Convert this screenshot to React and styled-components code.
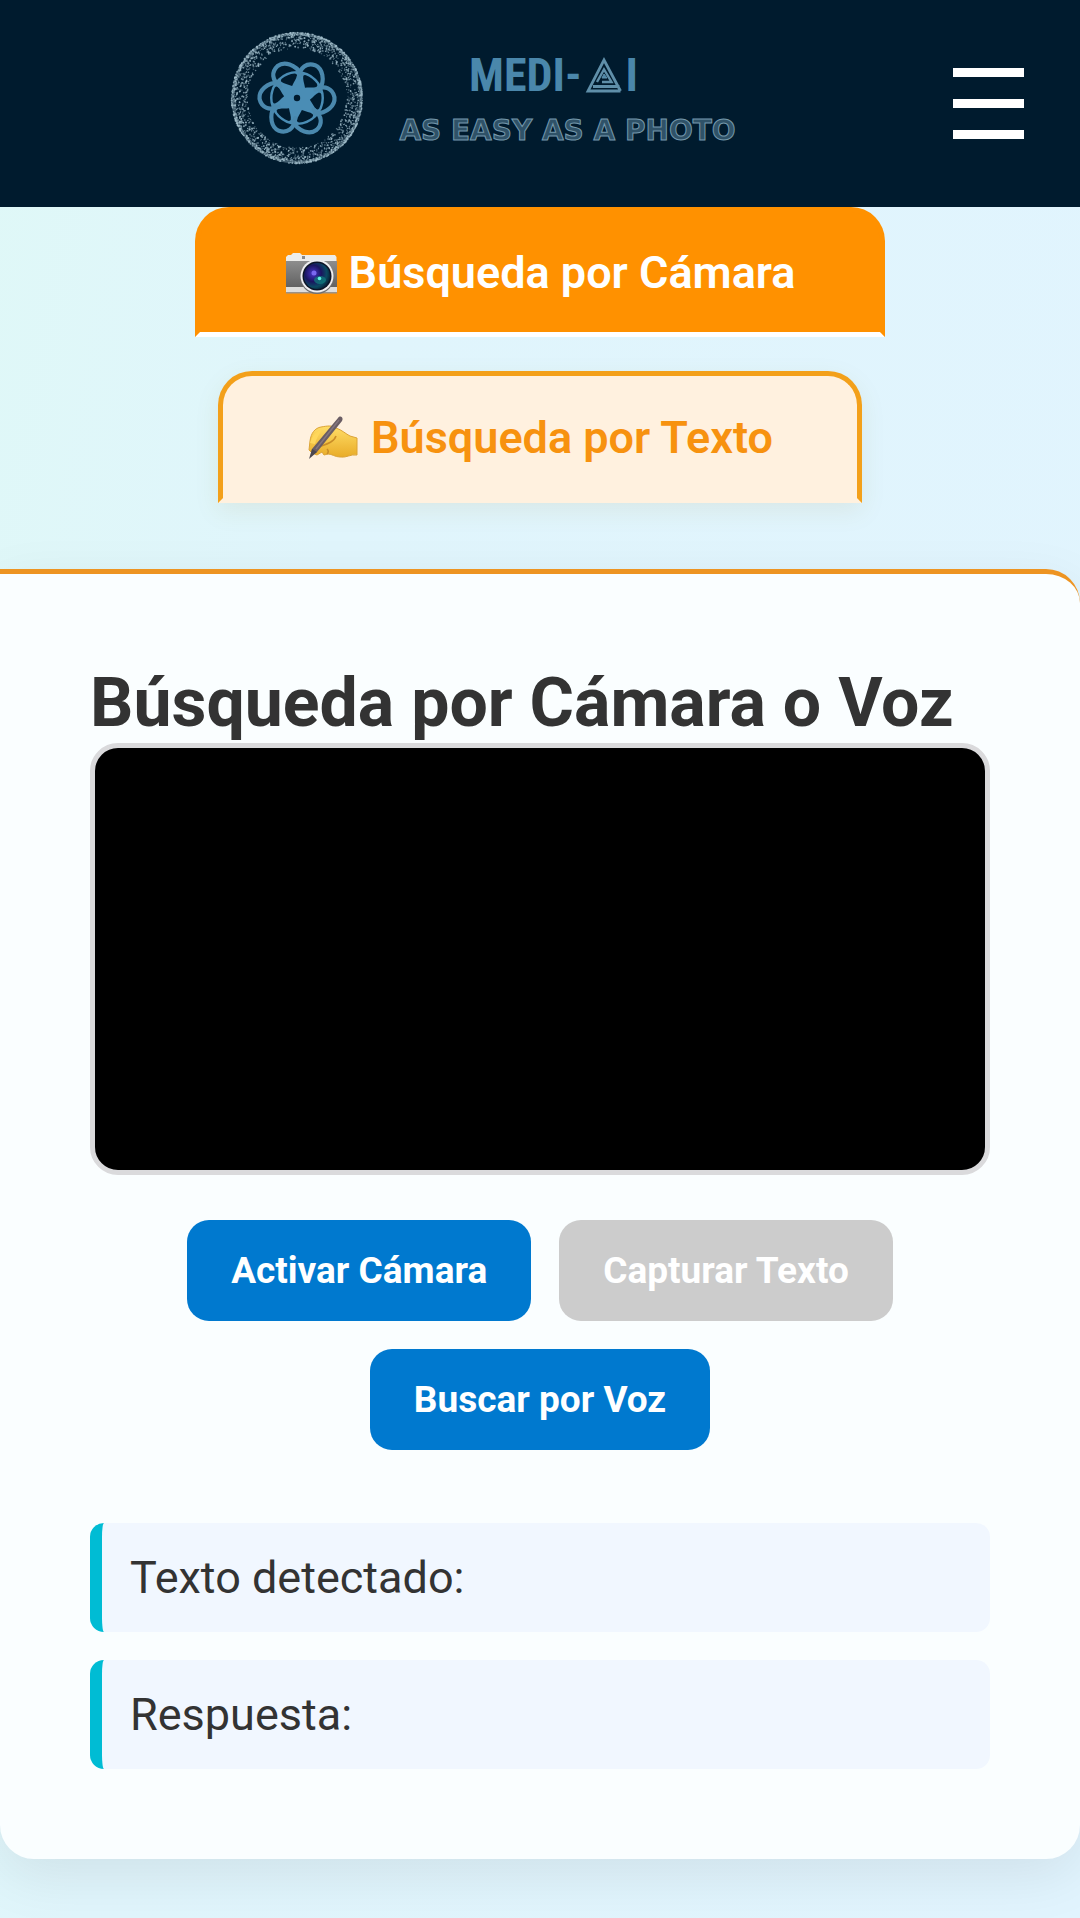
import React, { useState } from "react";
import styled, { createGlobalStyle, css } from "styled-components";

const GlobalStyle = createGlobalStyle`
  *, *::before, *::after { box-sizing: border-box; }
  body {
    margin: 0;
    min-height: 100vh;
    overflow-x: hidden;
    font-family: Roboto, "Noto Sans", sans-serif;
    font-size: 45px;
    color: #333333;
    background: linear-gradient(100deg, #dff8f7 0%, #e0f5fc 30%, #e1f4fe 100%);
  }
`;

const Header = styled.header`
  display: flex;
  align-items: center;
  padding: 30px 56px 31px 12px;
  background: #001b2e;
`;

const Brand = styled.a`
  flex: 1;
  display: flex;
  align-items: center;
  justify-content: center;
  gap: 34px;
  padding-bottom: 10px;
  color: #4a87ab;
  text-decoration: none;
`;

const BrandText = styled.span`
  display: flex;
  flex-direction: column;
  align-items: center;
  gap: 18px;
`;

const BrandName = styled.span`
  display: flex;
  align-items: center;
  gap: 3px;
  padding-right: 28px;
  font-family: "Liberation Sans Narrow", "Roboto Condensed", Roboto, sans-serif;
  font-size: 46px;
  line-height: 48px;
  font-weight: 700;
`;

const Tagline = styled.span`
  font-family: "DejaVu Sans", sans-serif;
  font-size: 28px;
  line-height: 28px;
  font-weight: 700;
  white-space: nowrap;
  color: #2f5268;
  -webkit-text-stroke: 1px #7598ab;
`;

const MenuButton = styled.button`
  display: flex;
  flex-direction: column;
  gap: 22px;
  padding: 0;
  border: 0;
  background: none;
  cursor: pointer;
`;

const MenuBar = styled.span`
  display: block;
  width: 71px;
  height: 9px;
  background: #ffffff;
`;

const Tabs = styled.nav`
  display: flex;
  flex-direction: column;
  align-items: center;
  gap: 34px;
  padding-bottom: 66px;
`;

const Tab = styled.button`
  display: flex;
  align-items: center;
  gap: 12px;
  border: 5px solid;
  border-radius: 34px 34px 0 0;
  font: 600 45px/52px Roboto, "Noto Sans", sans-serif;
  cursor: pointer;
  ${({ $active }) =>
    $active
      ? css`
          padding: 35px 85px 33px;
          color: #ffffff;
          background: #ff9100;
          border-color: #ff9100 #ff9100 #ffffff;
        `
      : css`
          padding: 36px 84px 34px;
          color: #f7920f;
          background: #fff1df;
          border-color: #f3a01a #f3a01a #fff1df;
          box-shadow: 0 8px 24px rgba(150, 130, 40, 0.1);
        `}
`;

const Panel = styled.main`
  padding: 90px;
  border-top: 5px solid #ed9422;
  border-radius: 0 34px 34px 34px;
  background: #fafeff;
  box-shadow: 0 17px 56px rgba(0, 0, 0, 0.08);
  margin-bottom: 59px;
`;

const Title = styled.h2`
  margin: 0;
  font-size: 68px;
  line-height: 79px;
  font-weight: 700;
`;

const CameraView = styled.video`
  display: block;
  width: 100%;
  aspect-ratio: 900 / 432;
  border: 5px solid #dadadc;
  border-radius: 28px;
  background: #000000;
`;

const Actions = styled.div`
  display: flex;
  flex-wrap: wrap;
  justify-content: center;
  gap: 28px;
  margin: 45px 0 73px;
`;

const ActionButton = styled.button`
  padding: 28px 44px;
  border: 0;
  border-radius: 22px;
  font: 700 37px/45px Roboto, "Noto Sans", sans-serif;
  color: #ffffff;
  background: #0079cf;
  cursor: pointer;
  &:disabled {
    background: #cccccc;
    cursor: default;
  }
`;

const Results = styled.section`
  display: flex;
  flex-direction: column;
  gap: 28px;
`;

const Result = styled.p`
  margin: 0;
  padding: 28px;
  border-left: 12px solid #00bcd4;
  border-radius: 14px;
  line-height: 53px;
  background: #f1f7ff;
`;

const specks = (() => {
  let seed = 7;
  const random = () => {
    seed = (seed * 16807) % 2147483647;
    return seed / 2147483647;
  };
  return Array.from({ length: 2200 }, () => {
    const angle = random() * Math.PI * 2;
    const radius = 65.5 - Math.pow(random(), 2) * 16;
    return {
      x: 68 + Math.cos(angle) * radius,
      y: 68 + Math.sin(angle) * radius,
      r: 0.5 + random() * 0.5,
      o: 0.35 + random() * 0.5,
    };
  });
})();

function AtomLogo() {
  return (
    <svg width="136" height="136" viewBox="0 0 136 136" aria-hidden="true">
      <circle cx="68" cy="68" r="64" fill="none" stroke="#7f9dac" strokeWidth="3" opacity="0.5" />
      {specks.map((s, i) => (
        <circle key={i} cx={s.x} cy={s.y} r={s.r} opacity={s.o} fill="#a3bfcc" />
      ))}
      <circle cx="68" cy="68" r="27" fill="#4a8db5" />
      {[8, 68, 128, 188, 248, 308].map((a) => (
        <g key={a} transform={`translate(68 68) rotate(${a})`}>
          <path d="M13 0C16-3 18-7 21-8.500Q22.500-9 23.500-7Q25.500 0 23.500 7Q22.500 9 21 8.500C18 7 16 3 13 0Z" fill="#001b2e" />
          <path
            d="M17-11C26-17 34-14 37-6C39 2 32 11 20 13"
            fill="none"
            stroke="#4a88ad"
            strokeWidth="4.200"
            strokeLinecap="round"
          />
        </g>
      ))}
      <circle cx="68" cy="68" r="3.200" fill="#001b2e" />
    </svg>
  );
}

function TriangleMark() {
  return (
    <svg width="38" height="36" viewBox="0 0 38 36" fill="none" stroke="#5f8fa9" aria-hidden="true">
      <path d="M8 29.500H34.500M35.500 34H3L19 3L35.500 34" strokeWidth="2.800" />
      <path d="M12 25L19 12.500L26.500 25H17" strokeWidth="2.400" />
      <path d="M17 21L19 17L22 21Z" fill="#4a87ab" strokeWidth="1" />
    </svg>
  );
}

function CameraIcon() {
  return (
    <svg width="52" height="44" viewBox="0 0 52 44" aria-hidden="true">
      <defs>
        <linearGradient id="cameraBody" x1="0" y1="0" x2="0" y2="1">
          <stop offset="0" stopColor="#8d8d8d" />
          <stop offset="1" stopColor="#626262" />
        </linearGradient>
        <radialGradient id="cameraLens" cx="0.35" cy="0.4" r="0.7">
          <stop offset="0" stopColor="#4b34c8" />
          <stop offset="0.45" stopColor="#1a1560" />
          <stop offset="0.75" stopColor="#0b4a62" />
          <stop offset="1" stopColor="#071d33" />
        </radialGradient>
      </defs>
      <path d="M6 4L8 2h7l2 2h33l1.500 2v35.500H1V6l2-2z" fill="#ececea" />
      <rect x="1" y="10" width="51" height="26" fill="url(#cameraBody)" />
      <rect x="1" y="36" width="51" height="5" fill="#dededc" />
      <rect x="1" y="41" width="51" height="1.500" fill="#9b9287" />
      <rect x="17" y="5" width="3" height="3" fill="#8a8a8a" />
      <circle cx="32" cy="26" r="17" fill="#6f6f70" />
      <circle cx="32" cy="25" r="16.500" fill="#eeeef0" />
      <circle cx="32" cy="25" r="14.500" fill="#0c1326" />
      <circle cx="32" cy="25" r="13" fill="url(#cameraLens)" />
      <ellipse cx="35" cy="29" rx="6" ry="4" fill="#11807f" opacity="0.7" />
      <circle cx="29" cy="22" r="2.500" fill="#7a68f0" />
      <circle cx="34.500" cy="27.500" r="1.800" fill="#5ff0e0" />
    </svg>
  );
}

function WritingIcon() {
  return (
    <svg width="52" height="44" viewBox="0 0 52 44" aria-hidden="true">
      <defs>
        <linearGradient id="handFill" x1="0" y1="0" x2="0" y2="1">
          <stop offset="0" stopColor="#ffdd67" />
          <stop offset="1" stopColor="#e9ac28" />
        </linearGradient>
      </defs>
      <path
        d="M3 25C4 17 8 12 14 11C20 10 25 9 29 12C35 14 39 18 43 20L50 22V39C43 38 40 42 33 41C28 41 25 38 21 38L17 39L15 36L10 39L5 37L2 34Z"
        fill="url(#handFill)"
        stroke="#dca437"
        strokeWidth="1"
      />
      <path d="M29 20C27 26 20 28 14 30M20 33C22 35 21 37 20 38" fill="none" stroke="#c98d28" strokeWidth="1.500" />
      <path d="M31 2C33-1 37 1 35 5L10 36L4 40L5 33Z" fill="#6a5d64" />
      <path d="M32 4L9 33" stroke="#84767f" strokeWidth="1.500" />
      <path d="M5 33L10 36L2 43Z" fill="#4b4750" />
      <path d="M3 27C5 20 9 15 15 14C12 18 9 23 8 28Z" fill="#ffd75b" />
    </svg>
  );
}

export default function App() {
  const [tab, setTab] = useState("camera");
  return (
    <>
      <GlobalStyle />
      <Header>
        <Brand href="#" aria-label="MEDI-AI">
          <AtomLogo />
          <BrandText>
            <BrandName>
              <span>MEDI-</span>
              <TriangleMark />
              <span>I</span>
            </BrandName>
            <Tagline>AS EASY AS A PHOTO</Tagline>
          </BrandText>
        </Brand>
        <MenuButton type="button" aria-label="Menú">
          <MenuBar />
          <MenuBar />
          <MenuBar />
        </MenuButton>
      </Header>
      <Tabs>
        <Tab type="button" $active={tab === "camera"} onClick={() => setTab("camera")}>
          <CameraIcon />
          Búsqueda por Cámara
        </Tab>
        <Tab type="button" $active={tab === "text"} onClick={() => setTab("text")}>
          <WritingIcon />
          Búsqueda por Texto
        </Tab>
      </Tabs>
      <Panel>
        <Title>Búsqueda por Cámara o Voz</Title>
        <CameraView />
        <Actions>
          <ActionButton type="button">Activar Cámara</ActionButton>
          <ActionButton type="button" disabled>
            Capturar Texto
          </ActionButton>
          <ActionButton type="button">Buscar por Voz</ActionButton>
        </Actions>
        <Results>
          <Result>Texto detectado:</Result>
          <Result>Respuesta:</Result>
        </Results>
      </Panel>
    </>
  );
}
